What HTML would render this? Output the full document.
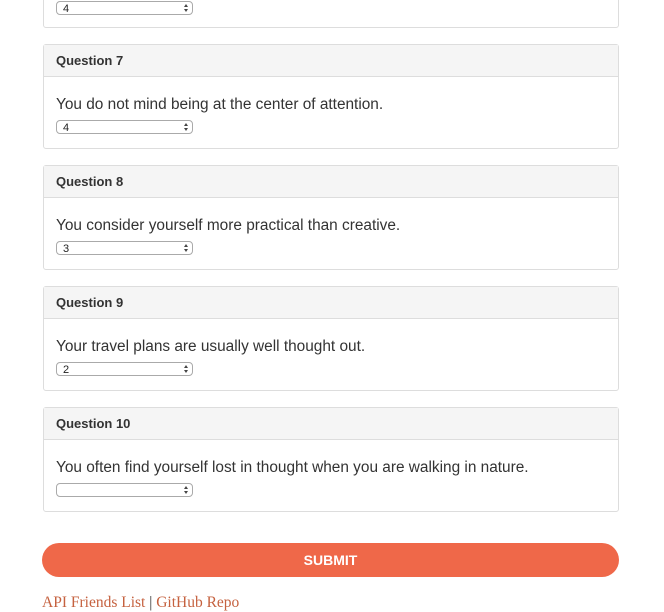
<!DOCTYPE html>
<html><head><style>
body{margin:0;background:#fff;width:664px;height:608px;overflow:hidden;position:relative;font-family:"Liberation Sans",sans-serif;}
.p{position:absolute;left:43px;width:574px;border:1px solid #ddd;border-radius:3px;background:#fff;}
.h{height:31px;background:#f5f5f5;border-bottom:1px solid #ddd;font-weight:bold;font-size:13px;color:#333;line-height:31px;padding-left:12px;}
.b{padding:19px 12px 0;font-size:15.4px;color:#333;height:58px;box-sizing:border-box;line-height:18px;}
.s{margin-top:6px;width:129px;height:12px;border:1px solid #aaa;border-radius:4px;font-size:11px;line-height:14px;padding-left:6px;box-sizing:content-box;position:relative;color:#222;}
.s:after{content:"";position:absolute;right:4px;top:2px;border-left:2px solid transparent;border-right:2px solid transparent;border-bottom:3px solid #444;}
.s:before{content:"";position:absolute;right:4px;top:7px;border-left:2px solid transparent;border-right:2px solid transparent;border-top:3px solid #444;}
</style></head><body>
<div class="p" style="top:-80px;height:106px"><div class="h"></div><div class="b" style="height:74px;padding-top:66px"><div class="s" style="margin-top:0;position:absolute;top:80px">4</div></div></div>
<div class="p" style="top:44px;height:103px"><div class="h">Question 7</div><div class="b">You do not mind being at the center of attention.<div class="s">4</div></div></div>
<div class="p" style="top:165px;height:103px"><div class="h">Question 8</div><div class="b">You consider yourself more practical than creative.<div class="s">3</div></div></div>
<div class="p" style="top:286px;height:103px"><div class="h">Question 9</div><div class="b">Your travel plans are usually well thought out.<div class="s">2</div></div></div>
<div class="p" style="top:407px;height:103px"><div class="h">Question 10</div><div class="b">You often find yourself lost in thought when you are walking in nature.<div class="s"></div></div></div>
<div style="position:absolute;left:42px;top:543px;width:577px;height:34px;border-radius:17px;background:#ef6849;color:#fff;font-weight:bold;font-size:14px;text-align:center;line-height:34px">SUBMIT</div>
<div style="position:absolute;left:42px;top:594px;font-family:'Liberation Serif',serif;font-size:15.5px;color:#c5613f">API Friends List <span style="color:#333">|</span> GitHub Repo</div>
</body></html>
